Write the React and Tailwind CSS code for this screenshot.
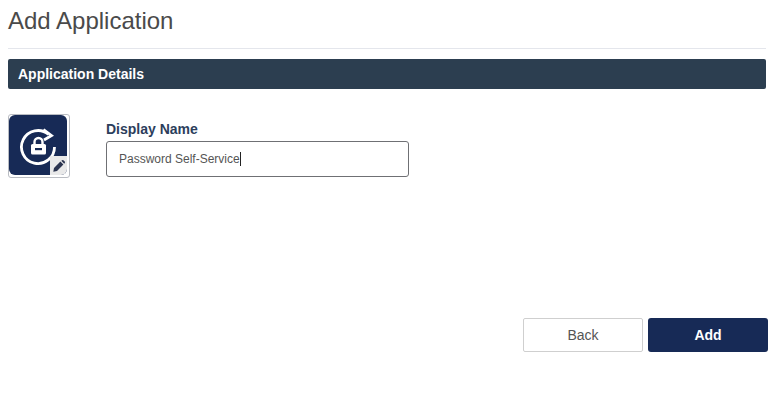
const LockRefreshIcon = () => (
  <svg viewBox="0 0 58 60" className="w-[58px] h-[60px]" fill="none">
    <path d="M39.6 19.4 A16.5 16.5 0 1 0 45.5 32" stroke="#fff" strokeWidth="2.8" />
    <path d="M34.5 14.5 L42.5 20.5 L35 25" stroke="#fff" strokeWidth="2.8" strokeLinejoin="miter" />
    <path d="M25.5 30 v-3 a4 4 0 0 1 8 0 v3" stroke="#fff" strokeWidth="2.4" />
    <rect x="22" y="29" width="15" height="10.5" rx="1.6" fill="#fff" />
    <rect x="26" y="33" width="7" height="2.2" fill="#172a56" />
  </svg>
);

const PencilIcon = () => (
  <svg viewBox="0 0 12 12" className="w-[12px] h-[12px]">
    <path d="M0.3 11.7 L1 8 L7.4 1.6 L10.4 4.6 L4 11 Z" fill="#2c3550" />
    <path d="M8.3 0.8 L9.1 0.2 Q9.8 -0.2 10.4 0.3 L11.7 1.6 Q12.2 2.2 11.8 2.9 L11.2 3.7 Z" fill="#2c3550" />
  </svg>
);

const App = () => {
  return (
    <div className="w-[781px] h-[405px] bg-white font-['Liberation_Sans',Arial,sans-serif] overflow-hidden">
      <div className="pl-2 pr-[15px]">
        <h1 className="h-[48px] pt-[7px] text-[24px] leading-[28px] text-[#4a4a4a]">Add Application</h1>
        <div className="border-t border-[#e4e6ec]" />

        {/* Section header */}
        <div className="mt-[10px] h-[30px] px-[10px] flex items-center bg-[#2c3e50] rounded-[2px] text-[14px] font-bold text-white">
          Application Details
        </div>

        <div className="mt-[25px] flex">
          <div className="relative w-[62px] h-[64px] border border-[#b9bcc2] rounded-[3px]">
            <div className="w-[58px] h-[60px] bg-[#172a56] rounded-[6px] overflow-hidden">
              <LockRefreshIcon />
            </div>
            <div className="absolute right-[2px] bottom-[2px] w-[17px] h-[19px] bg-[#e9e9e9] rounded-br-[6px] flex items-center justify-center">
              <PencilIcon />
            </div>
          </div>

          <div className="ml-[36px] w-[303px]">
            <label className="block mt-[7px] h-[20px] text-[14px] leading-[16px] font-bold text-[#2c3e5c]">Display Name</label>
            <div className="h-[36px] pl-3 flex items-center border border-[#6f7074] rounded-[3px] text-[12px] text-[#555]">
              Password Self-Service
              <span className="w-[1px] h-[14px] bg-[#222]" />
            </div>
          </div>
        </div>

        <div className="mt-[140px] -mr-[2px] flex justify-end gap-[5px]">
          <button className="w-[120px] h-[34px] bg-white border border-[#cfcfcf] rounded-[2px] text-[14px] text-[#555]">Back</button>
          <button className="w-[120px] h-[34px] bg-[#172a56] rounded-[3px] text-[14px] font-bold text-white">Add</button>
        </div>
      </div>
    </div>
  );
};

export default App;
